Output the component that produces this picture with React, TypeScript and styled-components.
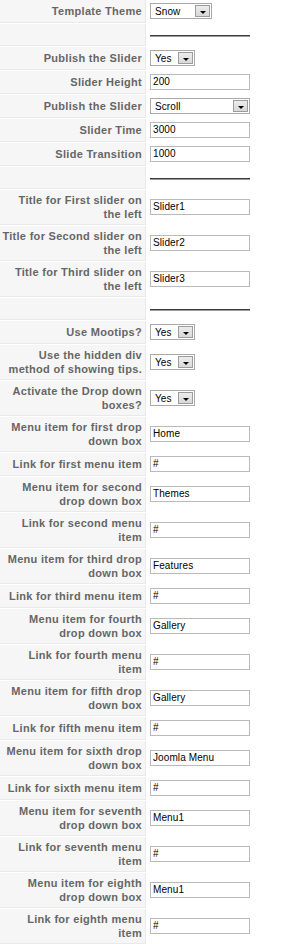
import React from "react";
import styled, { createGlobalStyle } from "styled-components";

const GlobalStyle = createGlobalStyle`
  html, body {
    margin: 0;
    padding: 0;
    background: #fff;
  }
  body {
    font-family: "Liberation Sans", Arial, sans-serif;
  }
`;

const ParamList = styled.div`
  display: grid;
  grid-template-columns: 146px 1fr;
  column-gap: 1px;
  row-gap: 1px;
  width: 293px;
`;

const KeyCell = styled.div`
  display: flex;
  align-items: center;
  justify-content: flex-end;
  box-sizing: border-box;
  min-height: 22px;
  padding: 3px 3px 3px 1.8px;
  background: #f6f6f6;
  border-right: 1px solid #e9e9e9;
  border-bottom: 1px solid #e9e9e9;
  color: #666;
  font-size: 11px;
  font-weight: bold;
  letter-spacing: 0.3px;
  line-height: 14px;
  text-align: right;
`;

const ValueCell = styled.div`
  display: flex;
  align-items: center;
  padding: 3px 0 4px 3px;
`;

const TextInput = styled.div`
  box-sizing: border-box;
  width: 100px;
  height: 16px;
  padding: 0 2px;
  border: 1px solid #bababa;
  background: #fff;
  color: #000;
  font-size: 10px;
  letter-spacing: 0.1px;
  line-height: 14px;
  white-space: nowrap;
  overflow: hidden;
`;

const SelectBox = styled.div<{ $width: number }>`
  box-sizing: border-box;
  display: flex;
  align-items: center;
  width: ${(p) => p.$width}px;
  height: 16px;
  padding-left: 4px;
  border: 1px solid #a9a9a9;
  background: #fff;
  color: #000;
  font-size: 10px;
  letter-spacing: 0.1px;
`;

const SelectText = styled.span`
  flex: 1;
  white-space: nowrap;
`;

const DropButton = styled.span`
  box-sizing: border-box;
  display: flex;
  align-items: center;
  justify-content: center;
  width: 15px;
  height: 12px;
  margin-right: 1px;
  border: 1px solid #9c9c9c;
  background: linear-gradient(#ececec, #d8d8d8);
`;

const Arrow = styled.span`
  width: 0;
  height: 0;
  margin-top: 3px;
  border-left: 3px solid transparent;
  border-right: 3px solid transparent;
  border-top: 3px solid #000;
`;

const Rule = styled.div`
  width: 100px;
  height: 0;
  margin-top: 2px;
  border-top: 1px solid #3c3c3c;
  border-bottom: 1px solid #9a9a9a;
`;

type Field =
  | { kind: "input"; label: string; value: string }
  | { kind: "select"; label: string; value: string; width: number }
  | { kind: "rule" };

const fields: Field[] = [
  { kind: "select", label: "Template Theme", value: "Snow", width: 62 },
  { kind: "rule" },
  { kind: "select", label: "Publish the Slider", value: "Yes", width: 45 },
  { kind: "input", label: "Slider Height", value: "200" },
  { kind: "select", label: "Publish the Slider", value: "Scroll", width: 100 },
  { kind: "input", label: "Slider Time", value: "3000" },
  { kind: "input", label: "Slide Transition", value: "1000" },
  { kind: "rule" },
  { kind: "input", label: "Title for First slider on the left", value: "Slider1" },
  { kind: "input", label: "Title for Second slider on the left", value: "Slider2" },
  { kind: "input", label: "Title for Third slider on the left", value: "Slider3" },
  { kind: "rule" },
  { kind: "select", label: "Use Mootips?", value: "Yes", width: 45 },
  { kind: "select", label: "Use the hidden div method of showing tips.", value: "Yes", width: 45 },
  { kind: "select", label: "Activate the Drop down boxes?", value: "Yes", width: 45 },
  { kind: "input", label: "Menu item for first drop down box", value: "Home" },
  { kind: "input", label: "Link for first menu item", value: "#" },
  { kind: "input", label: "Menu item for second drop down box", value: "Themes" },
  { kind: "input", label: "Link for second menu item", value: "#" },
  { kind: "input", label: "Menu item for third drop down box", value: "Features" },
  { kind: "input", label: "Link for third menu item", value: "#" },
  { kind: "input", label: "Menu item for fourth drop down box", value: "Gallery" },
  { kind: "input", label: "Link for fourth menu item", value: "#" },
  { kind: "input", label: "Menu item for fifth drop down box", value: "Gallery" },
  { kind: "input", label: "Link for fifth menu item", value: "#" },
  { kind: "input", label: "Menu item for sixth drop down box", value: "Joomla Menu" },
  { kind: "input", label: "Link for sixth menu item", value: "#" },
  { kind: "input", label: "Menu item for seventh drop down box", value: "Menu1" },
  { kind: "input", label: "Link for seventh menu item", value: "#" },
  { kind: "input", label: "Menu item for eighth drop down box", value: "Menu1" },
  { kind: "input", label: "Link for eighth menu item", value: "#" },
];

const Select = ({ value, width }: { value: string; width: number }) => (
  <SelectBox $width={width}>
    <SelectText>{value}</SelectText>
    <DropButton>
      <Arrow />
    </DropButton>
  </SelectBox>
);

const App = () => {
  return (
    <>
      <GlobalStyle />
      <ParamList>
        {fields.map((field, i) => (
          <React.Fragment key={i}>
            <KeyCell>{field.kind === "rule" ? "" : field.label}</KeyCell>
            <ValueCell>
              {field.kind === "rule" && <Rule />}
              {field.kind === "input" && <TextInput>{field.value}</TextInput>}
              {field.kind === "select" && (
                <Select value={field.value} width={field.width} />
              )}
            </ValueCell>
          </React.Fragment>
        ))}
      </ParamList>
    </>
  );
};

export default App;
